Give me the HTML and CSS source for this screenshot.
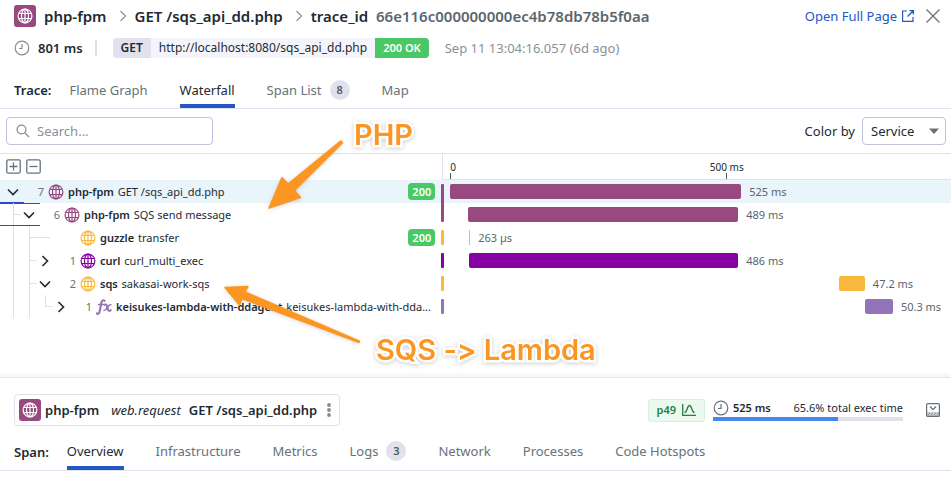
FILE: index.html
```html
<!DOCTYPE html>
<html lang="en">
<head>
<meta charset="utf-8">
<title>php-fpm GET /sqs_api_dd.php</title>
<link rel="stylesheet" href="styles.css">
</head>
<body>
<svg class="sprite" aria-hidden="true">
  <symbol id="globe" viewBox="0 0 16 16">
    <g fill="none" stroke="currentColor" stroke-width="1.2">
      <circle cx="8" cy="8" r="6.900"/>
      <ellipse cx="8" cy="8" rx="3.500" ry="6.900"/>
      <path d="M8 1.100v13.800M1.700 5.500h12.600M1.700 10.500h12.600"/>
    </g>
  </symbol>
  <symbol id="clock" viewBox="0 0 16 16">
    <g fill="none" stroke="currentColor" stroke-width="1.2">
      <circle cx="8" cy="8" r="6.8"/>
      <path d="M8 4v4.500H5"/>
    </g>
  </symbol>
  <symbol id="down" viewBox="0 0 16 16"><path d="M3 5.500l5 5 5-5" fill="none" stroke="currentColor" stroke-width="1.600"/></symbol>
  <symbol id="right" viewBox="0 0 16 16"><path d="M5.500 3l5 5-5 5" fill="none" stroke="currentColor" stroke-width="1.600"/></symbol>
  <symbol id="crumb" viewBox="0 0 8 12"><path d="M1.500 1l5 5-5 5" fill="none" stroke="currentColor" stroke-width="1.200"/></symbol>
</svg>

<main class="panel">
  <header class="title-row">
    <span class="service-icon"><svg><use href="#globe"/></svg></span>
    <h1 class="crumbs">
      <span>php-fpm</span>
      <svg class="crumb-sep"><use href="#crumb"/></svg>
      <span>GET /sqs_api_dd.php</span>
      <svg class="crumb-sep"><use href="#crumb"/></svg>
      <span>trace_id <span class="trace-id">66e116c000000000ec4b78db78b5f0aa</span></span>
    </h1>
    <a class="open-link" href="#">Open Full Page
      <svg viewBox="0 0 12 12"><path d="M5 1H.6v10.400H11V7M7.500.6h3.900v3.900M11 1L5.500 6.500" fill="none" stroke="currentColor" stroke-width="1.200"/></svg>
    </a>
    <button class="icon-button close" aria-label="Close"><svg viewBox="0 0 14 14"><path d="M.5.5l13 13M13.500.5l-13 13" stroke="currentColor" stroke-width="1.300"/></svg></button>
  </header>

  <div class="meta-row">
    <svg class="clock"><use href="#clock"/></svg>
    <strong class="duration">801 ms</strong>
    <span class="divider"></span>
    <span class="request"><b class="method">GET</b><span class="url">http://localhost:8080/sqs_api_dd.php</span><b class="status">200 OK</b></span>
    <time class="stamp">Sep 11 13:04:16.057 (6d ago)</time>
  </div>

  <nav class="tabs">
    <strong class="tabs-label">Trace:</strong>
    <a class="tab" href="#">Flame Graph</a>
    <a class="tab active" href="#">Waterfall</a>
    <a class="tab" href="#">Span List <span class="pill">8</span></a>
    <a class="tab" href="#">Map</a>
  </nav>

  <div class="toolbar">
    <label class="search">
      <svg viewBox="0 0 14 14"><g fill="none" stroke="currentColor" stroke-width="1.200"><circle cx="5.500" cy="5.500" r="4.400"/><path d="M8.700 8.700l4.300 4.300"/></g></svg>
      <input type="text" placeholder="Search..." aria-label="Search">
    </label>
    <label class="color-label" for="color-by">Color by</label>
    <span class="select">
      <select id="color-by"><option>Service</option></select>
      <svg viewBox="0 0 10 6"><path d="M0 .5h10L5 6z" fill="currentColor"/></svg>
    </span>
  </div>

  <section class="waterfall">
    <div class="ruler">
      <div class="expanders">
        <button class="icon-button" aria-label="Expand all"><svg viewBox="0 0 15 15"><g fill="none" stroke="currentColor" stroke-width="1.300"><rect x=".8" y=".8" width="13.400" height="13.400" rx="1.500"/><path d="M3.500 7.500h8M7.500 3.500v8"/></g></svg></button>
        <button class="icon-button" aria-label="Collapse all"><svg viewBox="0 0 15 15"><g fill="none" stroke="currentColor" stroke-width="1.300"><rect x=".8" y=".8" width="13.400" height="13.400" rx="1.500"/><path d="M3.500 7.500h8"/></g></svg></button>
      </div>
      <div class="scale">
        <span class="tick first">0</span>
        <span class="tick" style="margin-left:50.7%">500 ms</span>
      </div>
    </div>

    <div class="span-row php selected underline-short">
      <div class="span-name">
        <button class="caret" aria-label="Collapse"><svg><use href="#down"/></svg></button>
        <span class="count">7</span>
        <svg class="type"><use href="#globe"/></svg>
        <span class="name"><b>php-fpm</b> GET /sqs_api_dd.php</span>
        <b class="code">200</b>
      </div>
      <i class="key join-down"></i>
      <div class="track"><i class="bar" style="width:58.1%"></i><span>525 ms</span></div>
    </div>

    <div class="span-row php underline-long">
      <div class="span-name">
        <i class="guide branch"></i>
        <button class="caret" aria-label="Collapse"><svg><use href="#down"/></svg></button>
        <span class="count">6</span>
        <svg class="type"><use href="#globe"/></svg>
        <span class="name"><b>php-fpm</b> SQS send message</span>
      </div>
      <i class="key join-up"></i>
      <div class="track"><i class="bar" style="margin-left:3.6%;width:53.9%"></i><span>489 ms</span></div>
    </div>

    <div class="span-row amber">
      <div class="span-name">
        <i class="guide"></i><i class="guide branch"></i>
        <i class="caret leaf"></i>
        <span class="count"></span>
        <svg class="type"><use href="#globe"/></svg>
        <span class="name"><b>guzzle</b> transfer</span>
        <b class="code">200</b>
      </div>
      <i class="key"></i>
      <div class="track"><i class="bar" style="margin-left:3.8%;width:1px"></i><span>263 µs</span></div>
    </div>

    <div class="span-row violet">
      <div class="span-name">
        <i class="guide"></i><i class="guide branch"></i>
        <button class="caret" aria-label="Expand"><svg><use href="#right"/></svg></button>
        <span class="count">1</span>
        <svg class="type"><use href="#globe"/></svg>
        <span class="name"><b>curl</b> curl_multi_exec</span>
      </div>
      <i class="key"></i>
      <div class="track"><i class="bar" style="margin-left:3.8%;width:53.7%"></i><span>486 ms</span></div>
    </div>

    <div class="span-row amber">
      <div class="span-name">
        <i class="guide"></i><i class="guide branch"></i>
        <button class="caret" aria-label="Collapse"><svg><use href="#down"/></svg></button>
        <span class="count">2</span>
        <svg class="type"><use href="#globe"/></svg>
        <span class="name"><b>sqs</b> sakasai-work-sqs</span>
      </div>
      <i class="key"></i>
      <div class="track"><i class="bar" style="margin-left:77.6%;width:5.2%"></i><span>47.2 ms</span></div>
    </div>

    <div class="span-row lilac">
      <div class="span-name">
        <i class="guide"></i><i class="guide"></i><i class="guide branch end"></i>
        <button class="caret" aria-label="Expand"><svg><use href="#right"/></svg></button>
        <span class="count">1</span>
        <svg class="type" viewBox="0 0 16 16"><g fill="none" stroke="currentColor" stroke-linecap="round"><path d="M8.500 1.800C7 .4 5.700 1.800 5.300 4L3.700 12.200C3.300 14.400 2.200 15.500.8 14.400" stroke-width="2.100"/><path d="M2.600 5.500h5.200" stroke-width="1.500"/><path d="M8.600 5.700c1.400-.8 2 0 2.500 1.800l.9 3c.5 1.700 1.500 1.700 2.700.7" stroke-width="2"/><path d="M14.900 5.800c-1.500-.6-2.400.8-3.500 2.700s-2 3.300-3.400 2.800" stroke-width="1.500"/></g></svg>
        <span class="name"><b>keisukes-lambda-with-ddagent</b> keisukes-lambda-with-dda...</span>
      </div>
      <i class="key"></i>
      <div class="track"><i class="bar" style="margin-left:82.8%;width:5.6%"></i><span>50.3 ms</span></div>
    </div>
  </section>

  <section class="detail">
    <div class="detail-row">
      <div class="span-card">
        <span class="service-icon"><svg><use href="#globe"/></svg></span>
        <b>php-fpm</b>
        <em>web.request</em>
        <b>GET /sqs_api_dd.php</b>
        <button class="icon-button more" aria-label="More"><svg viewBox="0 0 4 14"><g fill="currentColor"><circle cx="2" cy="2" r="1.900"/><circle cx="2" cy="7" r="1.900"/><circle cx="2" cy="12" r="1.900"/></g></svg></button>
      </div>
      <span class="percentile">p49 <svg viewBox="0 0 14 12"><path d="M.7 0v11.300H14M2.500 8.500C5.500 8.500 5 1.500 7.500 1.500S9.500 8.500 12.500 8.500" fill="none" stroke="currentColor" stroke-width="1.300"/></svg></span>
      <div class="exec">
        <div class="exec-text"><svg class="clock"><use href="#clock"/></svg><b>525 ms</b><span>65.6% total exec time</span></div>
        <div class="meter"><i style="width:65.6%"></i></div>
      </div>
      <button class="icon-button dock" aria-label="Dock panel"><svg viewBox="0 0 14 14"><path d="M1 9h12v4H1z" fill="#c8cbcf"/><g fill="none" stroke="currentColor"><rect x=".6" y=".6" width="12.800" height="12.800" rx="1" stroke-width="1.200"/><path d="M4 3.500l3 3 3-3" stroke-width="1.300"/><path d="M2 12l2-2M5 12l2-2M8 12l2-2M11 12l2-2" stroke-width=".6"/></g></svg></button>
    </div>
    <nav class="tabs">
      <strong class="tabs-label">Span:</strong>
      <a class="tab active" href="#">Overview</a>
      <a class="tab" href="#">Infrastructure</a>
      <a class="tab" href="#">Metrics</a>
      <a class="tab" href="#">Logs <span class="pill">3</span></a>
      <a class="tab" href="#">Network</a>
      <a class="tab" href="#">Processes</a>
      <a class="tab" href="#">Code Hotspots</a>
    </nav>
  </section>

  <div class="notes">
    <svg viewBox="0 0 400 400" aria-hidden="true">
      <g fill="#fb9622" stroke="#fb9622" stroke-width="1.500" stroke-linejoin="round">
        <path d="M269 208L282 177.500L288 184L340.700 141L342.500 142.700L294.500 190.500L300.500 197.500Z"/>
        <path d="M225 287.500L248 286.500L245 292L359.500 341.300L359 342.500L242 298.500L239.500 305Z"/>
      </g>
    </svg>
    <span class="note note-php">PHP</span>
    <span class="note note-sqs">SQS -&gt; Lambda</span>
  </div>
</main>
</body>
</html>
```
FILE: styles.css
```css
* { box-sizing: border-box; }

body {
  margin: 0;
  background: #fff;
  color: #1c2b34;
  font-family: "Noto Sans", sans-serif;
  font-size: 13px;
  line-height: 20px;
}

b, strong { font-weight: 600; }
svg { display: block; flex: none; }
button, input, select { font: inherit; color: inherit; }
.sprite { position: absolute; width: 0; height: 0; }
.panel { position: relative; overflow: hidden; }

.icon-button {
  display: block;
  padding: 0;
  border: 0;
  background: none;
  color: #66727a;
}

.service-icon {
  display: grid;
  place-items: center;
  flex: none;
  width: 22px;
  height: 22px;
  border-radius: 3px;
  background: #984a80;
  color: #fff;
}
.service-icon svg { width: 16px; height: 16px; }

/* Header */
.title-row {
  display: flex;
  align-items: center;
  height: 32px;
  padding: 0 11px 0 14px;
}
.crumbs {
  display: flex;
  align-items: center;
  gap: 8px;
  flex: 1;
  margin: 0 0 0 8px;
  font-size: 15px;
  font-weight: 600;
  white-space: nowrap;
}
.crumb-sep { width: 8px; height: 12px; margin-left: 4px; color: #8a939a; }
.trace-id { margin-left: 4px; color: #5a666e; }
.open-link {
  display: flex;
  align-items: center;
  gap: 5px;
  color: #2257c4;
  text-decoration: none;
  white-space: nowrap;
}
.open-link svg { width: 12px; height: 12px; }
.close { margin-left: 12px; }
.close svg { width: 14px; height: 14px; }

.meta-row {
  display: flex;
  align-items: center;
  height: 32px;
  padding: 0 14px;
  white-space: nowrap;
}
.clock { width: 16px; height: 16px; color: #828c93; }
.duration { margin-left: 8px; }
.divider { width: 2px; height: 16px; margin: 0 16px 0 12px; background: #dfe0ec; }
.request {
  display: flex;
  overflow: hidden;
  border-radius: 4px;
  background: #f4f5fa;
  font-size: 12px;
}
.method { padding: 0 8px; background: #e1e1ed; }
.url { padding: 0 8px; }
.status { padding: 0 8px; background: #48c966; color: #fff; font-size: 11px; }
.stamp { margin-left: 16px; color: #87919a; }

/* Tabs */
.tabs {
  display: flex;
  gap: 32px;
  height: 45px;
  padding: 0 14px;
  border-bottom: 1px solid #e0e1ee;
  white-space: nowrap;
}
.tabs-label { margin-right: -14px; line-height: 52px; }
.tab {
  display: flex;
  align-items: center;
  gap: 8px;
  height: 44px;
  padding: 12px 0 0;
  border-bottom: 4px solid transparent;
  color: #66727a;
  text-decoration: none;
}
.tab.active { border-color: #2257c4; color: #1c2b34; }
.pill {
  min-width: 20px;
  border-radius: 10px;
  background: #e1e1ed;
  color: #4c5860;
  font-size: 11px;
  font-weight: 600;
  text-align: center;
}

/* Toolbar */
.toolbar {
  display: flex;
  align-items: center;
  height: 45px;
  padding: 0 5px 0 6px;
  border-bottom: 1px solid #e0e1ee;
}
.search {
  display: flex;
  align-items: center;
  gap: 7px;
  width: 207px;
  height: 28px;
  margin-right: auto;
  padding: 0 9px;
  border: 1px solid #c0c2e0;
  border-radius: 4px;
  color: #828c93;
}
.search svg { width: 14px; height: 14px; }
.search input { width: 100%; min-width: 0; padding: 0; border: 0; outline: 0; background: none; }
.search input::placeholder { color: #87919a; opacity: 1; }
.color-label { margin-right: 7px; }
.select { display: grid; align-items: center; width: 84px; }
.select > * { grid-area: 1 / 1; }
.select select {
  width: 100%;
  height: 28px;
  padding: 0 8px;
  border: 1px solid #c0c2e0;
  border-radius: 4px;
  background: #fff;
  appearance: none;
}
.select svg { width: 10px; height: 6px; margin-right: 7px; justify-self: end; color: #66727a; pointer-events: none; }

/* Waterfall */
.waterfall { padding-bottom: 59px; font-size: 11px; }
.ruler, .span-row { display: grid; grid-template-columns: 46.4% 3px minmax(0, 1fr); }
.ruler { height: 26px; }
.expanders { display: flex; align-items: flex-start; gap: 5px; padding: 5px 6px; }
.expanders svg { width: 15px; height: 15px; }
.scale {
  display: flex;
  grid-column: 2 / 4;
  align-items: flex-end;
  margin-left: 1px;
  padding-left: 7px;
  border-left: 1px solid #e0e1ee;
  border-bottom: 1px solid #e0e1ee;
  font-size: 10px;
}
.tick {
  display: flex;
  flex-direction: column;
  line-height: 11px;
  white-space: nowrap;
}
.tick::after { content: ""; width: 1px; height: 6px; margin: 0 auto; background: #4c5860; }
.tick.first::after { margin: 0; }

.span-row { position: relative; height: 23px; }
.php { --tone: #984a80; }
.amber { --tone: #f9b83c; }
.violet { --tone: #8700a3; }
.lilac { --tone: #9474b8; }
.selected { background: #e9f4fb; }
.underline-short::after, .underline-long::before, .underline-long::after {
  content: "";
  position: absolute;
  left: 0;
  bottom: 0;
  width: 24px;
  height: 1px;
  background: #2b49cf;
}
.underline-long::before, .underline-long::after { width: 40px; }
.underline-long::before { top: 0; }

.span-name { display: flex; align-items: center; min-width: 0; padding: 0 6px 0 5px; }
.guide, .caret { position: relative; flex: none; width: 16px; height: 23px; }
.guide::before, .branch::after, .leaf::after { content: ""; position: absolute; background: #dfe0ec; }
.guide::before { top: 0; bottom: 0; left: 8px; width: 1px; }
.branch::after { top: 11px; left: 8px; width: 8px; height: 1px; }
.end::before { bottom: 11px; }
.leaf::after { top: 11px; left: 0; width: 13px; height: 1px; }
.caret { display: grid; place-items: center; padding: 0; border: 0; background: none; }
.caret svg { width: 16px; height: 16px; }
.count { flex: none; width: 23px; margin-right: 4px; color: #66727a; text-align: right; }
.type { width: 16px; height: 16px; margin-right: 4px; color: var(--tone); }
.name { flex: 1; min-width: 0; white-space: nowrap; }
.name b { margin-right: 1px; }
.code {
  padding: 0 4px;
  border-radius: 4px;
  background: #48c966;
  color: #fff;
  line-height: 17px;
}
.key { height: 15px; margin-top: 4px; border-radius: 1px; background: var(--tone); }
.join-down { height: 19px; border-radius: 1px 1px 0 0; }
.join-up { height: 19px; margin-top: 0; border-radius: 0 0 1px 1px; }
.track { display: flex; align-items: center; gap: 8px; margin-left: 6px; color: #5a666e; white-space: nowrap; }
.bar { flex: none; height: 15px; border-radius: 2px; background: var(--tone); }

/* Span detail */
.detail { border-top: 1px solid #e6e7ea; box-shadow: 0 -2px 5px rgba(0, 0, 0, .06); }
.detail .tab { padding: 11px 0 1px; }
.detail-row { display: flex; align-items: center; height: 48px; padding: 16px 11px 0 14px; white-space: nowrap; }
.span-card {
  display: flex;
  align-items: center;
  height: 32px;
  margin-right: auto;
  padding: 0 8px 0 4px;
  border: 1px solid #dfe0ec;
  border-radius: 4px;
}
.span-card b { margin-left: 4px; }
.span-card em { margin: 0 4px 0 12px; }
.more { margin-left: 10px; color: #828c93; }
.more svg { width: 4px; height: 14px; }
.percentile {
  display: flex;
  align-items: center;
  gap: 6px;
  height: 23px;
  padding: 0 8px;
  border: 1px solid #d3f2da;
  border-radius: 3px;
  background: #ebf9ee;
  color: #2a7e41;
  font-size: 11px;
  font-weight: 600;
}
.percentile svg { width: 14px; height: 12px; }
.exec { width: 190px; margin: 0 23px 0 8px; font-size: 11px; }
.exec-text { display: flex; align-items: center; height: 18px; }
.exec-text b { margin: 0 auto 0 4px; }
.exec-text .clock { color: #66727a; }
.meter { height: 4px; background: #e1e1ed; }
.meter i { display: block; height: 4px; background: #4488ea; }
.dock svg { width: 14px; height: 14px; }

/* Annotations float above the chart */
.notes { position: absolute; inset: 0; pointer-events: none; }
.notes svg { width: 400px; height: 400px; filter: drop-shadow(0 1px 2px rgba(0, 0, 0, .15)); }
.note {
  position: absolute;
  color: #fb9622;
  font: 600 29px/32px Inter, sans-serif;
  font-variant-ligatures: no-contextual;
  white-space: nowrap;
  paint-order: stroke fill;
  -webkit-text-stroke: 5px #fff;
  filter: drop-shadow(0 1px 2px rgba(0, 0, 0, .2));
}
.note-php { left: 354px; top: 119px; }
.note-sqs { left: 376px; top: 334px; }
```
